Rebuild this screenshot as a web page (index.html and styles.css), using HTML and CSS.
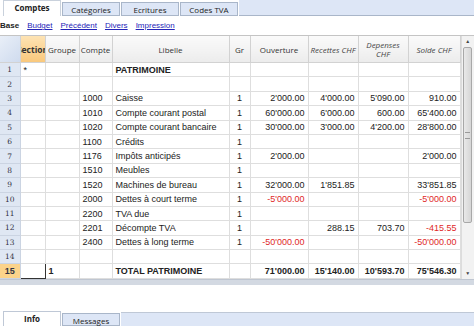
FILE: index.html
```html
<!DOCTYPE html>
<html>
<head>
    <title>Comptes</title>
    <link rel="stylesheet" href="styles.css">
</head>
<body>
    <div class="tabs">
        <span class="tab active">Comptes</span>
        <span class="tab">Catégories</span>
        <span class="tab">Ecritures</span>
        <span class="tab">Codes TVA</span>
        <span class="tab-rest"></span>
    </div>
    <div class="views">
        <b>Base</b>
        <a href="#">Budget</a>
        <a href="#">Précédent</a>
        <a href="#">Divers</a>
        <a href="#">Impression</a>
    </div>

    <div class="sheet">
        <table class="grid">
            <colgroup>
                <col style="width:20px"><col style="width:25px"><col style="width:34px">
                <col style="width:33px"><col style="width:117px"><col style="width:21px">
                <col style="width:58px"><col style="width:50px"><col style="width:50px">
                <col style="width:52px">
            </colgroup>
            <thead>
                <tr>
                    <th class="corner"></th>
                    <th class="cur"><div class="clip"><span>Section</span></div></th>
                    <th>Groupe</th>
                    <th>Compte</th>
                    <th>Libelle</th>
                    <th>Gr</th>
                    <th>Ouverture</th>
                    <th class="it">Recettes CHF</th>
                    <th class="it">Depenses CHF</th>
                    <th class="it">Solde CHF</th>
                </tr>
            </thead>
            <tbody>
                <tr><td class="num">1</td><td>*</td><td></td><td></td><td class="bold">PATRIMOINE</td><td></td><td></td><td></td><td></td><td></td></tr>
                <tr><td class="num">2</td><td></td><td></td><td></td><td></td><td></td><td></td><td></td><td></td><td></td></tr>
                <tr><td class="num">3</td><td></td><td></td><td>1000</td><td>Caisse</td><td class="c">1</td><td class="r">2'000.00</td><td class="r">4'000.00</td><td class="r">5'090.00</td><td class="r">910.00</td></tr>
                <tr><td class="num">4</td><td></td><td></td><td>1010</td><td>Compte courant postal</td><td class="c">1</td><td class="r">60'000.00</td><td class="r">6'000.00</td><td class="r">600.00</td><td class="r">65'400.00</td></tr>
                <tr><td class="num">5</td><td></td><td></td><td>1020</td><td>Compte courant bancaire</td><td class="c">1</td><td class="r">30'000.00</td><td class="r">3'000.00</td><td class="r">4'200.00</td><td class="r">28'800.00</td></tr>
                <tr><td class="num">6</td><td></td><td></td><td>1100</td><td>Crédits</td><td class="c">1</td><td></td><td></td><td></td><td></td></tr>
                <tr><td class="num">7</td><td></td><td></td><td>1176</td><td>Impôts anticipés</td><td class="c">1</td><td class="r">2'000.00</td><td></td><td></td><td class="r">2'000.00</td></tr>
                <tr><td class="num">8</td><td></td><td></td><td>1510</td><td>Meubles</td><td class="c">1</td><td></td><td></td><td></td><td></td></tr>
                <tr><td class="num">9</td><td></td><td></td><td>1520</td><td>Machines de bureau</td><td class="c">1</td><td class="r">32'000.00</td><td class="r">1'851.85</td><td></td><td class="r">33'851.85</td></tr>
                <tr><td class="num">10</td><td></td><td></td><td>2000</td><td>Dettes à court terme</td><td class="c">1</td><td class="r neg">-5'000.00</td><td></td><td></td><td class="r neg">-5'000.00</td></tr>
                <tr><td class="num">11</td><td></td><td></td><td>2200</td><td>TVA due</td><td class="c">1</td><td></td><td></td><td></td><td></td></tr>
                <tr><td class="num">12</td><td></td><td></td><td>2201</td><td>Décompte TVA</td><td class="c">1</td><td></td><td class="r">288.15</td><td class="r">703.70</td><td class="r neg">-415.55</td></tr>
                <tr><td class="num">13</td><td></td><td></td><td>2400</td><td>Dettes à long terme</td><td class="c">1</td><td class="r neg">-50'000.00</td><td></td><td></td><td class="r neg">-50'000.00</td></tr>
                <tr><td class="num">14</td><td></td><td></td><td></td><td></td><td></td><td></td><td></td><td></td><td></td></tr>
                <tr class="total"><td class="num cur">15</td><td class="sel"></td><td>1</td><td></td><td>TOTAL PATRIMOINE</td><td></td><td class="r">71'000.00</td><td class="r">15'140.00</td><td class="r">10'593.70</td><td class="r">75'546.30</td></tr>
            </tbody>
        </table>
        <div class="vscroll">
            <div class="arrow">&#9650;</div>
            <div class="thumb"><span class="grip"></span></div>
            <div class="track"></div>
            <div class="arrow">&#9660;</div>
        </div>
    </div>
    <div class="hband"></div>
    <div class="blank"></div>
    <div class="tabs bottom">
        <span class="tab active">Info</span>
        <span class="tab">Messages</span>
        <span class="tab-rest"></span>
    </div>
</body>
</html>
```

FILE: styles.css
```css
body {margin: 0;
      width: 474px;
      height: 326px;
      overflow: hidden;
      background: #fff;
      font-family: "Liberation Sans", Arial, sans-serif;
      font-size: 9px;
      color: #222;}

/* tab strips */
.tabs {display: flex;
       align-items: flex-end;
       height: 16px;
       padding-left: 3px;
       background: #fff;}
.tab {height: 14px;
      width: 58px;
      box-sizing: border-box;
      border: 1px solid #a9b6c9;
      border-bottom: none;
      background: #dde6f6;
      margin-right: 1px;
      font-family: "Open Sans", sans-serif;
      font-size: 8px;
      line-height: 13px;
      text-align: center;
      color: #222;}
.tab.active {height: 16px;
             background: #fff;
             font-weight: bold;
             border-color: #c9d1dc;}
.tab-rest {flex: 1;
           align-self: stretch;
           background: #dde6f6;
           border-bottom: 1px solid #a9b6c9;}
.tabs .tab:not(.active) {border-bottom: 1px solid #a9b6c9;}

.views {height: 19px;
        display: flex;
        align-items: center;
        gap: 8px;
        font-family: "Liberation Sans", sans-serif;
        font-size: 8px;}
.views a {color: #2424b8;}

/* spreadsheet */
.sheet {display: flex;
        height: 244px;
        border-top: 1px solid #c4c4c4;
        box-sizing: border-box;}
.grid {table-layout: fixed;
       width: 460px;
       border-collapse: collapse;}
.grid th {height: 26px;
          padding: 0;
          background: linear-gradient(#fafafa, #ececec);
          border: 1px solid #d2d2d2;
          border-top: none;
          font-family: "Open Sans", sans-serif;
          font-size: 8px;
          font-weight: normal;
          line-height: 9px;
          color: #333;
          overflow: hidden;
          white-space: nowrap;}
.grid th.it {font-style: italic;
             white-space: normal;
             color: #444;}
.grid th.corner {background: linear-gradient(135deg, #e9eff8, #cfdbee);
                 border-left: none;}
.grid th.cur {background: linear-gradient(#fde3b4, #f9c87c);}
.clip {display: flex;
       justify-content: center;
       overflow: hidden;
       font-weight: bold;
       font-size: 8.5px;}

.grid td {height: 13.4px;
          padding: 0 3px;
          border: 1px solid #dedede;
          white-space: nowrap;
          overflow: hidden;}
.grid td.num {background: #dfe7f3;
              border-color: #cbd4e2;
              border-left: none;
              font-family: "DejaVu Serif", serif;
              font-size: 7.5px;
              color: #334;
              text-align: center;
              padding: 0;}
.grid td.cur {background: #fbd38a;
              font-family: "Liberation Sans", sans-serif;
              font-size: 9px;
              font-weight: bold;}
.grid td.sel {border: 1px solid #333;}
.r {text-align: right;}
.c {text-align: center;}
.neg {color: #e02828;}
.bold, .total td {font-weight: bold;}
.total td {height: 14px;}

.vscroll {width: 14px;
          display: flex;
          flex-direction: column;
          background: #f2f2f2;
          border-left: 1px solid #dcdcdc;
          box-sizing: border-box;}
.arrow {height: 11px;
        font-size: 5px;
        line-height: 11px;
        text-align: center;
        color: #444;}
.thumb {height: 174px;
        margin: 0 2px 0 1px;
        background: linear-gradient(90deg, #e9e9e9, #d6d6d6);
        border: 1px solid #a8a8a8;
        border-radius: 2px;
        display: flex;
        align-items: center;
        justify-content: center;}
.grip {width: 5px;
       height: 5px;
       border-top: 1px solid #999;
       border-bottom: 1px solid #999;}
.track {flex: 1;}

.hband {height: 5px;
        background: #d3d9e2;
        border-top: 1px solid #bfc6d1;}
.blank {height: 26px;}
.tabs.bottom {height: 15px;}
.tabs.bottom .tab.active {height: 15px;
                         border-color: #bfc8d6;}
.tabs.bottom .tab {height: 13px;}
.tabs.bottom .tab-rest {border-bottom: none;
                        border-top: 1px solid #bfc8d6;
                        align-self: flex-end;
                        height: 13px;}
```
